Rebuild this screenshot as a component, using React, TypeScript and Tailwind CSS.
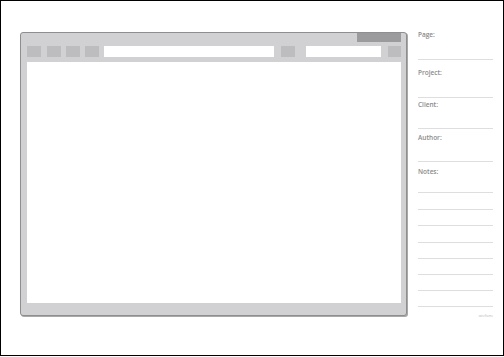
const noteLines = ['mt-[15px]', 'mt-[16px]', 'mt-[15px]', 'mt-[16px]', 'mt-[15px]', 'mt-[15px]', 'mt-[15px]', 'mt-[15px]']

function Field({ label, top, lineGap }: { label: string; top: string; lineGap: string }) {
  return (
    <>
      <div className={`${top} h-[10px] text-[6.5px] font-semibold leading-[10px] text-[#8a8a8a]`}>{label}</div>
      <div className={`${lineGap} h-px w-full bg-[#dedede]`} />
    </>
  )
}

export default function App() {
  return (
    <div
      className="flex h-[356px] w-[504px] items-start border border-black bg-white"
      style={{ fontFamily: '"Open Sans", "Liberation Sans", sans-serif' }}
    >
      {/* browser window */}
      <div className="ml-[19px] mt-[31px] flex h-[284px] w-[387px] flex-col rounded-[3px] border border-[#8e8e8e] bg-[#d1d1d3] pb-[12px] pl-[6px] pr-[5px] shadow-[1px_1px_0_#a8a8a8]">
        <div className="flex h-[9px] justify-end">
          <div className="w-[44px] bg-[#9b9b9d]" />
        </div>
        <div className="mt-[4px] flex h-[11px]">
          <div className="w-[14px] bg-[#bdbdbf]" />
          <div className="ml-[6px] w-[14px] bg-[#bdbdbf]" />
          <div className="ml-[5px] w-[14px] bg-[#bdbdbf]" />
          <div className="ml-[5px] w-[14px] bg-[#bdbdbf]" />
          <div className="ml-[5px] flex-1 bg-white" />
          <div className="ml-[7px] w-[14px] bg-[#bdbdbf]" />
          <div className="ml-[11px] w-[75px] bg-white" />
          <div className="ml-[7px] w-[13px] bg-[#bdbdbf]" />
        </div>
        <div className="mt-[5px] flex-1 bg-white" />
      </div>

      {/* notes panel */}
      <div className="ml-[11px] mt-[29px] flex w-[75px] flex-col">
        <Field label="Page:" top="" lineGap="mt-[19px]" />
        <Field label="Project:" top="mt-[8px]" lineGap="mt-[19px]" />
        <Field label="Client:" top="mt-[2px]" lineGap="mt-[18px]" />
        <Field label="Author:" top="mt-[4px]" lineGap="mt-[18px]" />
        <div className="mt-[5px] h-[10px] text-[6.5px] font-semibold leading-[10px] text-[#8a8a8a]">Notes:</div>
        {noteLines.map((m, i) => (
          <div key={i} className={`${m} h-px w-full bg-[#dedede]`} />
        ))}
        <div className="mt-[7px] text-right text-[3px] leading-[4px] text-[#b5b5b5]">wireframe</div>
      </div>
    </div>
  )
}
